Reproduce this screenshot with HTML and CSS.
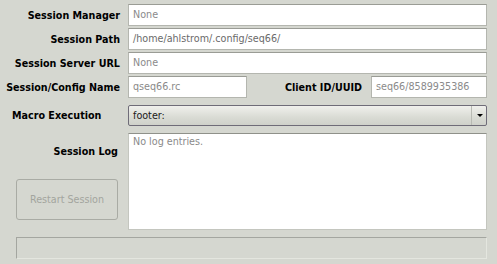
FILE: index.html
```html
<!DOCTYPE html>
<html lang="en">
<head>
    <meta charset="UTF-8">
    <meta name="viewport" content="width=device-width, initial-scale=1.0">
    <title>Session</title>
    <link rel="stylesheet" href="styles.css">
</head>
<body>
    <div class="panel">
        <div class="row">
            <label class="lbl">Session Manager</label>
            <div class="field dim">None</div>
        </div>
        <div class="row">
            <label class="lbl">Session Path</label>
            <div class="field mid">/home/ahlstrom/.config/seq66/</div>
        </div>
        <div class="row">
            <label class="lbl">Session Server URL</label>
            <div class="field dim">None</div>
        </div>
        <div class="row">
            <label class="lbl">Session/Config Name</label>
            <div class="split">
                <div class="field dim name">qseq66.rc</div>
                <label class="lbl client">Client ID/UUID</label>
                <div class="field dim uuid">seq66/8589935386</div>
            </div>
        </div>
        <div class="row macro">
            <label class="lbl left">Macro Execution</label>
            <div class="combo">
                <span>footer:</span>
                <span class="arrow"></span>
            </div>
        </div>
        <div class="row log">
            <div class="side">
                <label class="lbl">Session Log</label>
                <button class="restart" disabled>Restart Session</button>
            </div>
            <div class="logbox">No log entries.</div>
        </div>
        <div class="status"></div>
    </div>
</body>
</html>
```

FILE: styles.css
```css
*{
    margin: 0;
    padding: 0;
    box-sizing: border-box;
}
body{
    background-color: #d5d7d0;
    font-family: "DejaVu Sans", Verdana, sans-serif;
    font-size: 9.6px;
    color: #000;
}
.panel{
    width: 497px;
    height: 264px;
    padding: 4px 10px 0 0;
    display: flex;
    flex-direction: column;
}
.row{
    display: flex;
    align-items: center;
    height: 22px;
    margin-bottom: 2px;
}
.lbl{
    font-weight: bold;
    width: 128px;
    padding-right: 8px;
    text-align: right;
    flex: none;
}
.lbl.left{
    text-align: left;
    padding-left: 12px;
}
.field{
    flex: 1;
    height: 22px;
    line-height: 20px;
    padding-left: 4px;
    background-color: #fff;
    border: 1px solid #b4b6af;
    border-top-color: #9a9c95;
    white-space: nowrap;
    overflow: hidden;
}
.dim{
    color: #8a8a8a;
}
.mid{
    color: #6a6a6a;
}
.split{
    flex: 1;
    display: flex;
    align-items: center;
}
.name{
    flex: none;
    width: 119px;
}
.client{
    width: auto;
    flex: 1;
    padding-right: 9px;
}
.uuid{
    flex: none;
    width: 116px;
}
.macro{
    margin-top: 5px;
    height: 21px;
}
.combo{
    flex: 1;
    height: 21px;
    display: flex;
    align-items: center;
    justify-content: space-between;
    padding-left: 4px;
    border: 1px solid #6f6c78;
    border-radius: 2px;
    background: linear-gradient(#f0f0ec, #d9dbd4 60%, #cfd1ca);
    color: #1a1a1a;
}
.arrow{
    width: 15px;
    height: 100%;
    border-left: 1px solid #b8bab3;
    position: relative;
}
.arrow::after{
    content: "";
    position: absolute;
    left: 5px;
    top: 8px;
    border-left: 3px solid transparent;
    border-right: 3px solid transparent;
    border-top: 3px solid #000;
}
.log{
    margin-top: 5px;
    height: 97px;
    align-items: stretch;
}
.side{
    width: 128px;
    flex: none;
    display: flex;
    flex-direction: column;
    align-items: flex-end;
}
.side .lbl{
    width: 128px;
    margin-top: 13px;
    padding-right: 10px;
}
.restart{
    align-self: flex-start;
    margin-left: 16px;
    margin-top: 22px;
    width: 102px;
    height: 41px;
    background: transparent;
    border: 1px solid #a9aba4;
    border-radius: 3px;
    font-family: "DejaVu Sans", Verdana, sans-serif;
    font-size: 9.6px;
    color: #a3a59e;
}
.logbox{
    flex: 1;
    background-color: #fff;
    border: 1px solid #c4c6bf;
    border-top-color: #8f918a;
    color: #8a8a8a;
    padding: 2px 4px;
}
.status{
    margin: 5px 0 0 16px;
    height: 22px;
    border: 1px solid #e4e6df;
    border-top-color: #a4a6a0;
    border-left-color: #a4a6a0;
}
```
